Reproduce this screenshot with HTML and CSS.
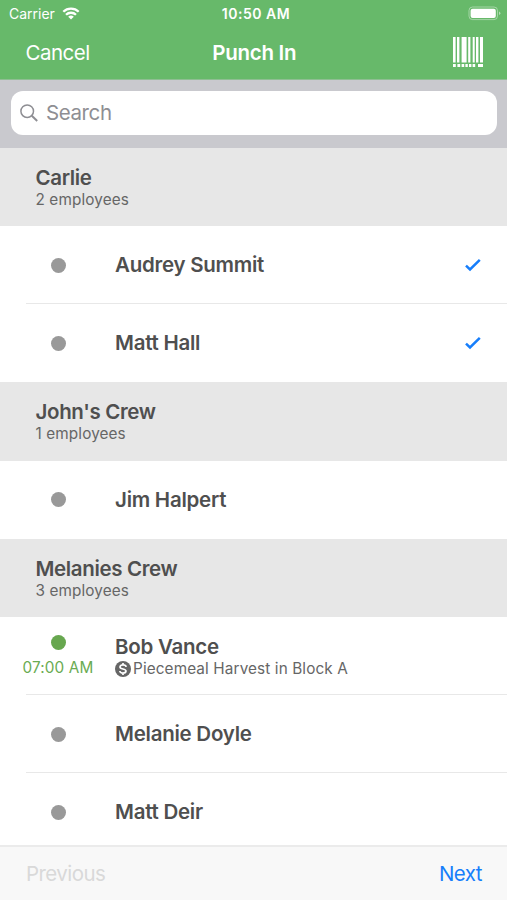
FILE: index.html
```html
<!DOCTYPE html>
<html lang="en">
<head>
    <meta charset="UTF-8">
    <meta name="viewport" content="width=device-width, initial-scale=1.0">
    <title>Punch In</title>
    <link rel="stylesheet" href="styles.css">
</head>
<body>
    <header>
        <div class="status-bar">
            <div class="carrier">
                <span>Carrier</span>
                <svg class="wifi" viewBox="0 0 18 13" width="18" height="13">
                    <path d="M1.300 4.800a11 11 0 0 1 15.400 0M4 7.800a7.100 7.100 0 0 1 10 0" fill="none" stroke="#fff" stroke-width="2.3"/>
                    <path d="M9 12.600L6.200 9.800a4 4 0 0 1 5.600 0z" fill="#fff"/>
                </svg>
            </div>
            <span class="clock">10:50 AM</span>
            <svg class="battery" viewBox="0 0 33 15" width="33" height="15">
                <rect x="1" y="1" width="28.5" height="12.6" rx="3.5" fill="none" stroke="#fff" stroke-opacity=".4"/>
                <rect x="2.6" y="2.7" width="25.2" height="9.3" rx="2" fill="#fff"/>
                <path d="M31 5.500v3.600q1.400-.6 1.400-1.800t-1.400-1.800z" fill="#fff" fill-opacity=".5"/>
            </svg>
        </div>
        <nav class="nav-bar">
            <a class="cancel">Cancel</a>
            <h1>Punch In</h1>
            <svg class="barcode" viewBox="0 0 30 30" width="30" height="30" fill="#fff">
                <path d="M0 0h2.600v25.500H0zM4 0h2.400v25.500H4zM8.600 0h5v25.500h-5zM15.200 0h2.200v25.500h-2.200zM19.700 0h2v25.500h-2zM23 0h2.400v25.500H23zM27 0h3v25.500h-3z"/>
                <path d="M0 27h2.800v3H0zM4.400 27h2.800v3H4.400zM8.600 27h2.600v3H8.600zM12.400 27h2.400v3h-2.400zM16 27h2.400v3H16zM19.600 27h2.600v3h-2.600zM25 27h5v3h-5z"/>
            </svg>
        </nav>
    </header>

    <div class="search-bar">
        <div class="search-field">
            <svg viewBox="0 0 18 18" width="18" height="18" fill="none" stroke="#8e8e93">
                <circle cx="7.2" cy="7.2" r="6.3" stroke-width="1.5"/>
                <path d="M11.800 11.800l5.400 5.200" stroke-width="2"/>
            </svg>
            <span>Search</span>
        </div>
    </div>

    <main class="list">
        <div class="crew">
            <div class="name">Carlie</div>
            <div class="detail">2 employees</div>
        </div>
        <div class="employee">
            <div class="status"><i class="dot"></i></div>
            <div class="info"><div class="name">Audrey Summit</div></div>
            <svg class="check" viewBox="0 0 16 13" width="16" height="13"><path d="M1 6.700l4 3.800L14.800 .9" fill="none" stroke="#167efb" stroke-width="2.5"/></svg>
        </div>
        <div class="employee last">
            <div class="status"><i class="dot"></i></div>
            <div class="info"><div class="name">Matt Hall</div></div>
            <svg class="check" viewBox="0 0 16 13" width="16" height="13"><path d="M1 6.700l4 3.800L14.800 .9" fill="none" stroke="#167efb" stroke-width="2.5"/></svg>
        </div>

        <div class="crew">
            <div class="name">John's Crew</div>
            <div class="detail">1 employees</div>
        </div>
        <div class="employee last">
            <div class="status"><i class="dot"></i></div>
            <div class="info"><div class="name">Jim Halpert</div></div>
        </div>

        <div class="crew">
            <div class="name">Melanies Crew</div>
            <div class="detail">3 employees</div>
        </div>
        <div class="employee">
            <div class="status working"><i class="dot"></i><span class="time">07:00 AM</span></div>
            <div class="info">
                <div class="name">Bob Vance</div>
                <div class="detail job">
                    <svg viewBox="0 0 16 16" width="16" height="16">
                        <circle cx="8" cy="8" r="8" fill="#666"/>
                        <path d="M11.200 5.900C10.900 4.500 9.700 3.900 8 3.900c-1.800 0-3 .7-3 2 0 2.700 6 1.400 6 4.200 0 1.300-1.200 2-3 2s-3-.7-3.200-2.100M8 2v2M8 12v2" fill="none" stroke="#fff" stroke-width="1.7"/>
                    </svg>
                    <span>Piecemeal Harvest in Block A</span>
                </div>
            </div>
        </div>
        <div class="employee">
            <div class="status"><i class="dot"></i></div>
            <div class="info"><div class="name">Melanie Doyle</div></div>
        </div>
        <div class="employee">
            <div class="status"><i class="dot"></i></div>
            <div class="info"><div class="name">Matt Deir</div></div>
        </div>
    </main>

    <footer>
        <a class="previous">Previous</a>
        <a class="next">Next</a>
    </footer>
</body>
</html>
```
FILE: styles.css
```css
* { box-sizing: border-box; }
body { margin: 0; height: 900px; display: flex; flex-direction: column; overflow: hidden; background: #fff; color: #4f4f4f; font-family: Inter, Roboto, sans-serif; }
svg { display: block; flex: none; }

header { height: 80px; flex: none; background: #67b96a; color: #fff; border-bottom: 1px solid #8fbe93; }
.status-bar { display: grid; grid-template-columns: 1fr auto 1fr; align-items: center; height: 27px; padding: 0 6px 0 9px; font-size: 14px; }
.carrier { display: flex; align-items: center; gap: 7px; }
.clock { padding-left: 2px; font-weight: 600; letter-spacing: 0.5px; }
.battery { justify-self: end; }
.nav-bar { display: grid; grid-template-columns: 1fr auto 1fr; align-items: center; height: 51px; padding: 0 24px 0 25.5px; font-size: 20.5px; letter-spacing: -0.5px; }
.nav-bar h1 { margin: 0; font-size: 20.5px; font-weight: 600; letter-spacing: -0.3px; }
.barcode { justify-self: end; margin-bottom: 1px; }

.search-bar { height: 68px; flex: none; padding: 11px 10px 13px 11px; background: #c9c9ce; }
.search-field { display: flex; align-items: center; gap: 8px; height: 44px; padding-left: 9px; border-radius: 12px; background: #fff; color: #8e8e93; font-size: 20.5px; letter-spacing: -0.4px; }
.search-field span { padding-bottom: 2px; }

.list { flex: 1; min-height: 0; overflow: hidden; }
.crew { height: 78.15px; padding: 17px 35.5px 0; background: #e7e7e7; }
.name { font-size: 20.5px; font-weight: 600; line-height: 26px; letter-spacing: -0.25px; }
.crew .name { letter-spacing: -0.35px; }
.detail { font-size: 15.3px; line-height: 18px; letter-spacing: 0.12px; color: #666; }
.employee { display: flex; align-items: center; height: 78.15px; padding-right: 26px; background: linear-gradient(#e8e8e8, #e8e8e8) 26px 100% / 100% 1px no-repeat; }
.employee.last { background: none; }
.status { display: flex; flex-direction: column; align-items: center; width: 116px; margin-right: -1px; }
.status .dot { width: 15px; height: 15px; border-radius: 50%; background: #999; }
.working .dot { background: #67a74f; }
.working { padding-top: 1px; }
.time { margin-top: 8px; font-size: 15.3px; line-height: 20px; letter-spacing: 0.15px; color: #6aab52; }
.info { flex: 1; }
.job { display: flex; align-items: center; gap: 2px; }

footer { display: flex; justify-content: space-between; align-items: center; height: 55px; flex: none; padding: 0 25px 0 26px; background: #f8f8f8; border-top: 2px solid #ebebeb; font-size: 20.5px; letter-spacing: -0.55px; }
.previous { color: #d9d9d9; }
.next { color: #167efb; }
```
